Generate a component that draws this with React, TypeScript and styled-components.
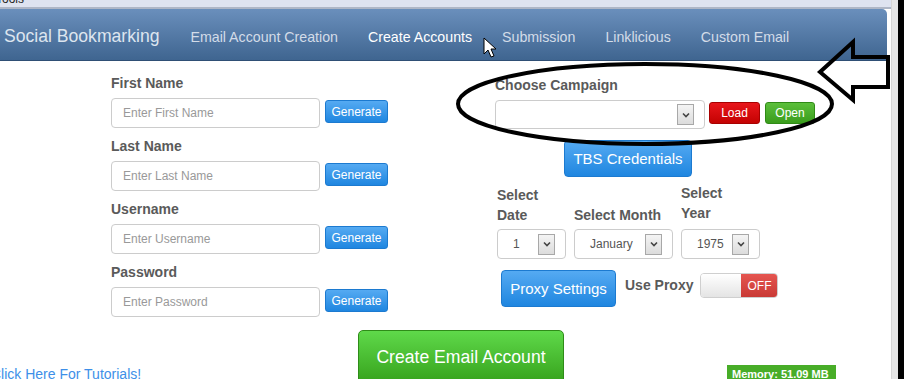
import styled, { createGlobalStyle, css } from "styled-components";

const GlobalStyle = createGlobalStyle`
  html, body {
    margin: 0;
    padding: 0;
    background: #fff;
  }
  body {
    font-family: "Liberation Sans", Arial, sans-serif;
  }
`;

const Page = styled.div`
  position: relative;
  width: 904px;
  height: 379px;
  overflow: hidden;
  display: flex;
  align-items: flex-start;
  background: #fff;
`;

const Content = styled.div`
  width: 891px;
  display: flex;
  flex-direction: column;

  & > * {
    flex-shrink: 0;
  }
`;

const Scrollbar = styled.div`
  width: 7px;
  height: 379px;
  background: #e6e6e6;
  border-left: 1px solid #d6d6d6;
  box-sizing: border-box;
`;

const Edge = styled.div`
  flex: 1;
  height: 379px;
  background: #000;
`;

const TopStrip = styled.div`
  height: 7px;
  background: #dee3f0;
  border-bottom: 2px solid #aeb6c6;
  overflow: hidden;
  font-size: 12px;
  line-height: 12px;
  color: #222;
`;

const StripText = styled.span`
  display: block;
  margin: -7px 0 0 -4px;
`;

const NavBar = styled.div`
  width: 887px;
  height: 52px;
  box-sizing: border-box;
  display: flex;
  align-items: center;
  gap: 30px;
  padding: 4px 0 0 4px;
  background: linear-gradient(#6a8fbc, #3f6590);
  border-bottom: 1px solid #2f4f75;
  border-top-right-radius: 5px;
`;

const Brand = styled.span`
  font-size: 17.6px;
  color: #dde5ef;
  margin-right: 1px;
`;

const NavItem = styled.span<{ $active?: boolean }>`
  font-size: 14.2px;
  color: ${({ $active }) => ($active ? "#ffffff" : "#d3dce8")};
`;

const Body = styled.div`
  display: flex;
  padding: 12px 0 0 111px;
`;

const LeftCol = styled.div`
  width: 384px;
  display: flex;
  flex-direction: column;
  gap: 8px;
`;

const Field = styled.div`
  display: flex;
  flex-direction: column;
  gap: 5px;
`;

const Label = styled.div<{ $max?: number; $lift?: number }>`
  font-size: 14px;
  font-weight: bold;
  line-height: 20px;
  color: #5a5a5a;
  max-width: ${({ $max }) => ($max ? `${$max}px` : "none")};
  margin-bottom: ${({ $lift }) => $lift ?? 0}px;
`;

const InputRow = styled.div`
  display: flex;
  align-items: flex-start;
  gap: 5px;
`;

const TextInput = styled.div`
  width: 209px;
  height: 30px;
  box-sizing: border-box;
  border: 1px solid #cccccc;
  border-radius: 4px;
  padding: 0 11px;
  display: flex;
  align-items: center;
  font-size: 12px;
  color: #999;
`;

const blue = css`
  color: #fff;
  background: linear-gradient(#55aaf2, #1f86e0);
  border: 1px solid #1c7ad0;
`;

const SmallButton = styled.div<{ $tone: "blue" | "red" | "green" }>`
  height: 23px;
  box-sizing: border-box;
  border-radius: 3px;
  font-size: 12px;
  display: flex;
  align-items: center;
  justify-content: center;
  ${({ $tone }) =>
    $tone === "blue"
      ? blue
      : $tone === "red"
      ? css`
          color: #fff;
          background: linear-gradient(#e8161b, #c40202);
          border: 1px solid #a80000;
        `
      : css`
          color: #fff;
          background: linear-gradient(#5bbf3b, #3a9c1c);
          border: 1px solid #2f8a16;
        `}
`;

const GenButton = styled(SmallButton)`
  width: 63px;
  margin-top: 2px;
`;

const RightCol = styled.div`
  width: 330px;
  display: flex;
  flex-direction: column;
  padding-top: 2px;
`;

const CampaignRow = styled.div`
  display: flex;
  align-items: flex-start;
  margin-top: 5px;
`;

const SelectBox = styled.div<{ $w: number; $h?: number }>`
  width: ${({ $w }) => $w}px;
  height: ${({ $h }) => $h ?? 30}px;
  box-sizing: border-box;
  border: 1px solid #cccccc;
  border-radius: 4px;
  display: flex;
  align-items: center;
  padding: 0 10px 0 15px;
  font-size: 12px;
  color: #555;
`;

const SelectText = styled.span`
  flex: 1;
`;

const ArrowBox = styled.div`
  width: 17px;
  height: 21px;
  box-sizing: border-box;
  border: 1px solid #a8a8a8;
  background: linear-gradient(#f4f4f4, #dcdcdc);
  display: flex;
  align-items: center;
  justify-content: center;
`;

const Chevron = () => (
  <svg width="8" height="6" viewBox="0 0 8 6">
    <path d="M1 1.5 L4 4.5 L7 1.5" fill="none" stroke="#444" strokeWidth="1.6" />
  </svg>
);

const LoadButton = styled(SmallButton)`
  width: 51px;
  height: 22px;
  margin: 2px 0 0 4px;
`;

const OpenButton = styled(SmallButton)`
  width: 50px;
  height: 22px;
  margin: 2px 0 0 5px;
`;

const BigButton = styled.div`
  ${blue};
  height: 37px;
  box-sizing: border-box;
  border-radius: 4px;
  font-size: 15px;
  display: flex;
  align-items: center;
  justify-content: center;
`;

const TbsButton = styled(BigButton)`
  width: 128px;
  margin: 11px 0 0 69px;
`;

const DateRow = styled.div`
  display: flex;
  gap: 8px;
  margin: 6px 0 0 2px;
`;

const DateCol = styled.div<{ $w: number }>`
  width: ${({ $w }) => $w}px;
  display: flex;
  flex-direction: column;
  justify-content: flex-end;
  gap: 4px;
`;

const ProxyRow = styled.div`
  display: flex;
  align-items: flex-start;
  margin: 11px 0 0 6px;
`;

const ProxyButton = styled(BigButton)`
  width: 115px;
`;

const ProxyLabel = styled(Label)`
  margin: 5px 0 0 9px;
`;

const Toggle = styled.div`
  display: flex;
  width: 78px;
  height: 25px;
  margin: 3px 0 0 7px;
  box-sizing: border-box;
  border: 1px solid #cfcfcf;
  border-radius: 4px;
  overflow: hidden;
`;

const ToggleKnob = styled.div`
  width: 40px;
  background: linear-gradient(#ffffff, #e4e4e4);
`;

const ToggleOff = styled.div`
  flex: 1;
  background: linear-gradient(#e55550, #c93a35);
  color: #fff;
  font-size: 12px;
  display: flex;
  align-items: center;
  justify-content: center;
`;

const Footer = styled.div`
  display: flex;
  align-items: flex-end;
  margin-top: 13px;
`;

const TutorialLink = styled.a`
  width: 367px;
  margin-left: -9px;
  flex-shrink: 0;
  font-size: 14px;
  line-height: 20px;
  color: #3d8fe8;
  text-decoration: none;
  white-space: nowrap;
`;

const CreateButton = styled.div`
  width: 206px;
  height: 54px;
  flex-shrink: 0;
  box-sizing: border-box;
  border: 1px solid #2e8c18;
  border-radius: 5px;
  background: linear-gradient(#5fd94a, #36a21c);
  color: #fff;
  font-size: 17.6px;
  display: flex;
  align-items: center;
  justify-content: center;
`;

const MemoryBadge = styled.div`
  margin: 0 0 2px 163px;
  height: 17px;
  padding: 0 7px 0 5px;
  background: #48ad28;
  color: #fff;
  font-size: 11px;
  font-weight: bold;
  line-height: 18px;
  white-space: nowrap;
`;

const Annotations = styled.svg`
  position: absolute;
  left: 0;
  top: 0;
  pointer-events: none;
`;

const GenerateField = ({ label, placeholder }: { label: string; placeholder: string }) => (
  <Field>
    <Label>{label}</Label>
    <InputRow>
      <TextInput>{placeholder}</TextInput>
      <GenButton $tone="blue">Generate</GenButton>
    </InputRow>
  </Field>
);

export default function App() {
  return (
    <>
      <GlobalStyle />
      <Page>
        <Content>
          <TopStrip>
            <StripText>Tools</StripText>
          </TopStrip>
          <NavBar>
            <Brand>Social Bookmarking</Brand>
            <NavItem>Email Account Creation</NavItem>
            <NavItem $active>Create Accounts</NavItem>
            <NavItem>Submission</NavItem>
            <NavItem>Linklicious</NavItem>
            <NavItem>Custom Email</NavItem>
          </NavBar>
          <Body>
            <LeftCol>
              <GenerateField label="First Name" placeholder="Enter First Name" />
              <GenerateField label="Last Name" placeholder="Enter Last Name" />
              <GenerateField label="Username" placeholder="Enter Username" />
              <GenerateField label="Password" placeholder="Enter Password" />
            </LeftCol>
            <RightCol>
              <Label>Choose Campaign</Label>
              <CampaignRow>
                <SelectBox $w={210} $h={29}>
                  <SelectText />
                  <ArrowBox>
                    <Chevron />
                  </ArrowBox>
                </SelectBox>
                <LoadButton $tone="red">Load</LoadButton>
                <OpenButton $tone="green">Open</OpenButton>
              </CampaignRow>
              <TbsButton>TBS Credentials</TbsButton>
              <DateRow>
                <DateCol $w={69}>
                  <Label>Select Date</Label>
                  <SelectBox $w={69}>
                    <SelectText>1</SelectText>
                    <ArrowBox>
                      <Chevron />
                    </ArrowBox>
                  </SelectBox>
                </DateCol>
                <DateCol $w={99}>
                  <Label>Select Month</Label>
                  <SelectBox $w={99}>
                    <SelectText>January</SelectText>
                    <ArrowBox>
                      <Chevron />
                    </ArrowBox>
                  </SelectBox>
                </DateCol>
                <DateCol $w={79}>
                  <Label $max={60} $lift={2}>
                    Select Year
                  </Label>
                  <SelectBox $w={79}>
                    <SelectText>1975</SelectText>
                    <ArrowBox>
                      <Chevron />
                    </ArrowBox>
                  </SelectBox>
                </DateCol>
              </DateRow>
              <ProxyRow>
                <ProxyButton>Proxy Settings</ProxyButton>
                <ProxyLabel>Use Proxy</ProxyLabel>
                <Toggle>
                  <ToggleKnob />
                  <ToggleOff>OFF</ToggleOff>
                </Toggle>
              </ProxyRow>
            </RightCol>
          </Body>
          <Footer>
            <TutorialLink href="#">Click Here For Tutorials!</TutorialLink>
            <CreateButton>Create Email Account</CreateButton>
            <MemoryBadge>Memory: 51.09 MB</MemoryBadge>
          </Footer>
        </Content>
        <Scrollbar />
        <Edge />

        {/* hand-drawn markup on top of the screenshot */}
        <Annotations width="904" height="379" viewBox="0 0 904 379">
          <ellipse cx="645" cy="104" rx="187" ry="40" fill="none" stroke="#000" strokeWidth="4" />
          <polygon
            points="820,72 853,42 853,57 888,57 888,87 853,87 853,100"
            fill="none"
            stroke="#000"
            strokeWidth="4"
            strokeLinejoin="miter"
          />
          <polygon
            points="484,38 484,54 488,50 491,57 494,56 491,49 496,49"
            fill="#fff"
            stroke="#000"
            strokeWidth="1"
          />
        </Annotations>
      </Page>
    </>
  );
}
